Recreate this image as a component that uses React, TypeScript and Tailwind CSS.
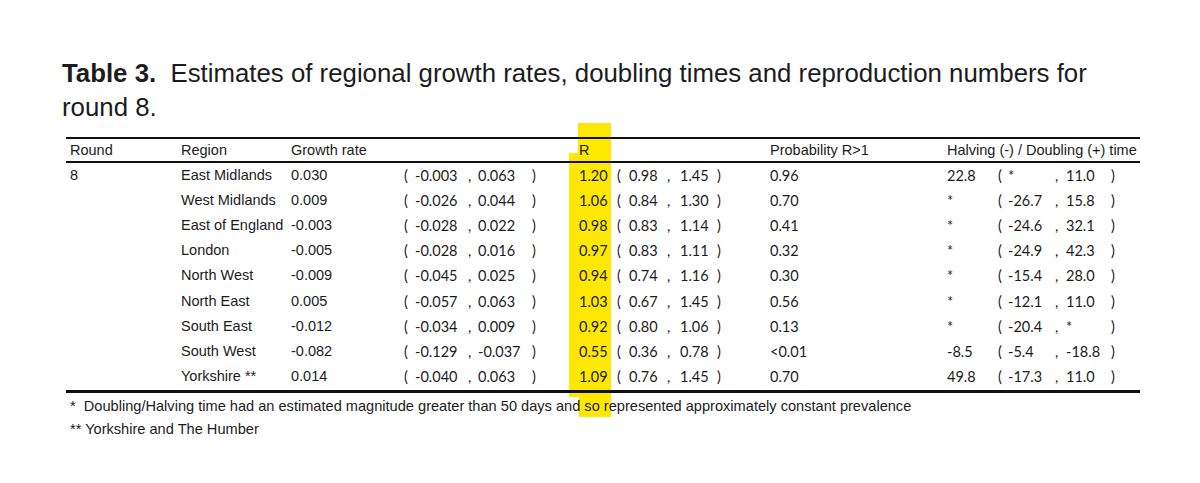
const rows = [
  { region: 'East Midlands', g: '0.030', gLo: '-0.003', gHi: '0.063', r: '1.20', rLo: '0.98', rHi: '1.45', p: '0.96', t: '22.8', tLo: '*', tHi: '11.0' },
  { region: 'West Midlands', g: '0.009', gLo: '-0.026', gHi: '0.044', r: '1.06', rLo: '0.84', rHi: '1.30', p: '0.70', t: '*', tLo: '-26.7', tHi: '15.8' },
  { region: 'East of England', g: '-0.003', gLo: '-0.028', gHi: '0.022', r: '0.98', rLo: '0.83', rHi: '1.14', p: '0.41', t: '*', tLo: '-24.6', tHi: '32.1' },
  { region: 'London', g: '-0.005', gLo: '-0.028', gHi: '0.016', r: '0.97', rLo: '0.83', rHi: '1.11', p: '0.32', t: '*', tLo: '-24.9', tHi: '42.3' },
  { region: 'North West', g: '-0.009', gLo: '-0.045', gHi: '0.025', r: '0.94', rLo: '0.74', rHi: '1.16', p: '0.30', t: '*', tLo: '-15.4', tHi: '28.0' },
  { region: 'North East', g: '0.005', gLo: '-0.057', gHi: '0.063', r: '1.03', rLo: '0.67', rHi: '1.45', p: '0.56', t: '*', tLo: '-12.1', tHi: '11.0' },
  { region: 'South East', g: '-0.012', gLo: '-0.034', gHi: '0.009', r: '0.92', rLo: '0.80', rHi: '1.06', p: '0.13', t: '*', tLo: '-20.4', tHi: '*' },
  { region: 'South West', g: '-0.082', gLo: '-0.129', gHi: '-0.037', r: '0.55', rLo: '0.36', rHi: '0.78', p: '<0.01', t: '-8.5', tLo: '-5.4', tHi: '-18.8' },
  { region: 'Yorkshire **', g: '0.014', gLo: '-0.040', gHi: '0.063', r: '1.09', rLo: '0.76', rHi: '1.45', p: '0.70', t: '49.8', tLo: '-17.3', tHi: '11.0' },
]

const grid =
  'grid grid-cols-[115px_110px_113px_11px_53px_10px_54px_47px_38px_12px_38px_13px_37px_53px_177px_51px_10px_47px_11px_45px_1fr] items-center'

// calibri-ish cells
const num = "font-['Lato',sans-serif] text-[14.5px]"

export default function App() {
  return (
    <div className="relative w-[1200px] h-[483px] bg-white text-[#1c1c1c] font-['Liberation_Sans',Arial,sans-serif] overflow-hidden">
      {/* highlighter marks over the R column */}
      <div className="absolute left-[578px] top-[123px] w-[33px] h-[31px] bg-[#ffe800]" />
      <div className="absolute left-[569px] top-[153px] w-[42px] h-[244px] bg-[#ffe800]" />
      <div className="absolute left-[579px] top-[396px] w-[32px] h-[21px] bg-[#ffe800]" />

      <div className="relative pt-[56px]">
        <h2 className="ml-[62px] text-[25.8px] leading-[34px]">
          <span className="font-bold">Table 3.</span>&nbsp; Estimates of regional growth rates, doubling times and reproduction numbers for
          <br />
          round 8.
        </h2>

        <div className="ml-[66px] w-[1074px] mt-[13px] text-[14.5px]">
          <div className={`${grid} border-t-2 border-b-2 border-[#111] h-[26px] pt-[1px]`}>
            <div className="pl-1">Round</div>
            <div>Region</div>
            <div className="col-span-6">Growth rate</div>
            <div className="col-span-6">R</div>
            <div>Probability R&gt;1</div>
            <div className="col-span-6">Halving (-) / Doubling (+) time</div>
          </div>

          <div className="border-b-[3px] border-[#111]">
            {rows.map((row, i) => (
              <div key={row.region} className={`${grid} h-[25.2px] whitespace-nowrap`}>
                <div className="pl-1">{i === 0 ? '8' : ''}</div>
                <div>{row.region}</div>
                <div>{row.g}</div>
                <div className={num}>(</div>
                <div className={num}>{row.gLo}</div>
                <div className={num}>,</div>
                <div className={num}>{row.gHi}</div>
                <div className={num}>)</div>
                <div className={num}>{row.r}</div>
                <div className={num}>(</div>
                <div className={num}>{row.rLo}</div>
                <div className={num}>,</div>
                <div className={num}>{row.rHi}</div>
                <div className={num}>)</div>
                <div className={num}>{row.p}</div>
                <div className={num}>{row.t}</div>
                <div className={num}>(</div>
                <div className={num}>{row.tLo}</div>
                <div className={num}>,</div>
                <div className={num}>{row.tHi}</div>
                <div className={num}>)</div>
              </div>
            ))}
          </div>

          <div className="pl-1 pt-[2px] text-[14.6px] leading-[23px]">
            <p>*&nbsp; Doubling/Halving time had an estimated magnitude greater than 50 days and so represented approximately constant prevalence</p>
            <p>** Yorkshire and The Humber</p>
          </div>
        </div>
      </div>
    </div>
  )
}
